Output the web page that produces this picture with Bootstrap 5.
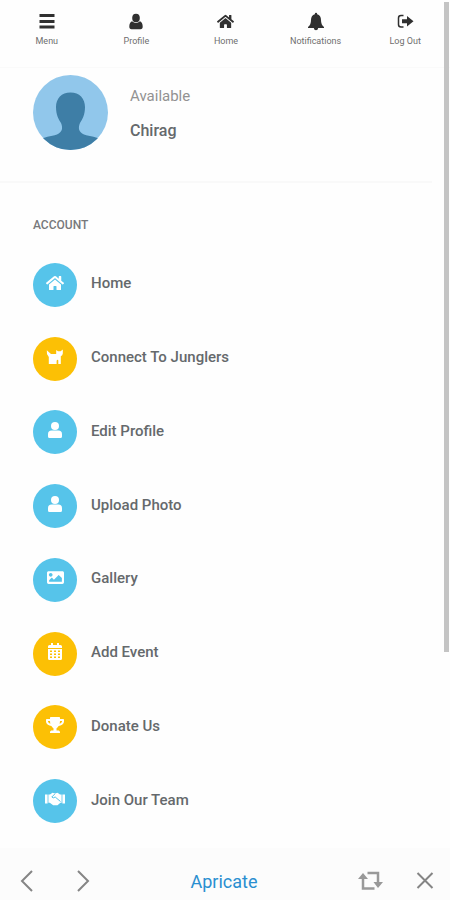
<!DOCTYPE html>
<html lang="en">
<head>
<meta charset="utf-8">
<meta name="viewport" content="width=device-width, initial-scale=1">
<title>Apricate</title>
<link href="https://cdn.jsdelivr.net/npm/bootstrap@5.3.0/dist/css/bootstrap.min.css" rel="stylesheet">
<style>
  body { font-family: Roboto, "Liberation Sans", sans-serif; background: #fefefe; color: #65696c; }
  svg { display: block; }
  a { color: inherit; text-decoration: none; }
  .topbar { padding: 12px 0 0 2px; height: 68px; border-bottom: 1px solid #fafafa; }
  .topbar a { flex: 1 1 0; font-size: 9px; line-height: 12px; color: #6e6e6e; }
  .topbar svg { fill: #303030; height: 20px; margin-bottom: 3px; }
  .profile { padding: 7px 33px 31px; gap: 22px; border-bottom: 2px solid #f9f9f9; margin-right: 18px; }
  .status { font-size: 15px; line-height: 20px; color: #929292; margin: 11px 0 15px; }
  .username { font-size: 16px; line-height: 20px; font-weight: 500; margin: 0; }
  .section-title { font-size: 12px; line-height: 16px; font-weight: 500; color: #77797b; margin: 34px 33px 15px; }
  .menu-list { padding: 0 33px; }
  .menu-list a { gap: 14px; font-size: 15px; line-height: 20px; font-weight: 500; }
  .menu-list a > span:last-child { padding-bottom: 3px; }
  .disc { width: 44px; height: 44px; padding-bottom: 4px; background: #56c4ea; }
  .disc.gold { background: #fcc005; }
  .disc svg { fill: #fff; }
  .bottombar { background: #fcfcfc; margin-top: 10px; padding: 20px 16px 0 20px; height: 52px; }
  .bottombar button { background: none; border: 0; padding: 0; }
  .bottombar svg { fill: none; stroke: #858585; stroke-width: 2; }
  .history { gap: 42px; }
  .actions { gap: 32px; }
  .site { font-size: 18px; line-height: 24px; color: #2a8fd0; padding-top: 2px; }
  .scroll-thumb { top: 2px; right: 1px; width: 5px; height: 650px; background: #c4c4c4; }
</style>
<script src="https://cdn.jsdelivr.net/npm/bootstrap@5.3.0/dist/js/bootstrap.bundle.min.js"></script>
</head>
<body>
<svg width="0" height="0" class="position-absolute" aria-hidden="true">
  <symbol id="i-home" viewBox="0 0 576 512"><path d="M280.37 148.26L96 300.11V464a16 16 0 0 0 16 16l112.06-.29a16 16 0 0 0 15.92-16V368a16 16 0 0 1 16-16h64a16 16 0 0 1 16 16v95.64a16 16 0 0 0 16 16.05L464 480a16 16 0 0 0 16-16V300L295.67 148.26a12.19 12.19 0 0 0-15.3 0zM571.6 251.47L488 182.56V44.05a12 12 0 0 0-12-12h-56a12 12 0 0 0-12 12v72.61L318.47 43a48 48 0 0 0-61 0L4.34 251.47a12 12 0 0 0-1.6 16.9l25.5 31A12 12 0 0 0 45.15 301l235.22-193.74a12.19 12.19 0 0 1 15.3 0L530.9 301a12 12 0 0 0 16.9-1.6l25.5-31a12 12 0 0 0-1.7-16.93z"/></symbol>
  <symbol id="i-user" viewBox="0 0 14 16"><circle cx="7" cy="4" r="4"/><path d="M3.6 8.6h6.8A3.6 3.6 0 0 1 14 12.200V14.500Q14 16 12.500 16H1.500Q0 16 0 14.500V12.200A3.600 3.600 0 0 1 3.600 8.600z"/></symbol>
</svg>

<div class="d-flex flex-column min-vh-100 position-relative">
  <nav class="topbar d-flex text-center" aria-label="Main">
    <a href="#" class="d-flex flex-column align-items-center">
      <svg width="16" height="20" viewBox="0 0 16 20"><path d="M0.500 2h15v3h-15zM0.500 8h15v3h-15zM0.500 13.500h15v3h-15z"/></svg>Menu</a>
    <a href="#" class="d-flex flex-column align-items-center">
      <svg width="14" height="20" viewBox="0 0 14 20"><ellipse cx="7" cy="6" rx="3.800" ry="4.300"/><path d="M3 9.300Q7 12.800 11 9.300Q13.700 10.500 13.700 14.500Q13.700 17.200 11.500 17.200H2.500Q.3 17.200.3 14.500Q.3 10.500 3 9.300z"/></svg>Profile</a>
    <a href="#" class="d-flex flex-column align-items-center">
      <svg width="17" height="20"><use href="#i-home" width="17" height="19"/></svg>Home</a>
    <a href="#" class="d-flex flex-column align-items-center">
      <svg width="18" height="20" viewBox="0 0 18 20"><path d="M9 .8q1.200 0 1.200 1.400Q14 3.200 14 8Q14 13 17 15V16H11.200Q10.900 18.300 9 18.300T6.800 16H1V15Q4 13 4 8Q4 3.200 7.800 2.200Q7.800.8 9 .8z"/></svg>Notifications</a>
    <a href="#" class="d-flex flex-column align-items-center">
      <svg width="17" height="20" viewBox="0 0 17 20"><path d="M6.500 3.500H4Q1.500 3.500 1.500 6v6.500Q1.500 15 4 15H6.500" fill="none" stroke="#303030" stroke-width="1.500"/><path d="M5 7.200h5V4l6.500 5.300L10 14.600v-3.300H5z"/></svg>Log Out</a>
  </nav>

  <header class="profile d-flex">
    <svg width="75" height="75" viewBox="0 0 75 75" role="img" aria-label="Profile picture">
      <defs><clipPath id="round"><circle cx="37.500" cy="37.500" r="37.500"/></clipPath></defs>
      <g clip-path="url(#round)"><path fill="#91c7eb" d="M0 0h75v75H0z"/>
      <path fill="#3e7ea6" d="M37.500 17.500C46.500 17.500 52 23.500 52 32C52 40 49.500 44 47 48C45 53 45.500 57 51 59.500C57 61.500 64 61.500 70 66V75H5V66C11 61.500 18 61.500 24 59.500C29.500 57 30 53 28 48C25.500 44 23 40 23 32C23 23.500 28.500 17.500 37.500 17.500z"/></g>
    </svg>
    <div>
      <p class="status">Available</p>
      <p class="username">Chirag</p>
    </div>
  </header>

  <h2 class="section-title">ACCOUNT</h2>
  <ul class="menu-list list-unstyled d-flex flex-column flex-grow-1 mb-0">
    <li class="d-flex flex-fill align-items-center"><a href="#" class="d-flex align-items-center">
      <span class="disc rounded-circle d-flex align-items-center justify-content-center"><svg width="18" height="16"><use href="#i-home"/></svg></span><span>Home</span></a></li>
    <li class="d-flex flex-fill align-items-center"><a href="#" class="d-flex align-items-center">
      <span class="disc gold rounded-circle d-flex align-items-center justify-content-center"><svg width="18" height="16" viewBox="0 0 18 16"><path d="M.8 1.200L3 3.200L5 5H10.200V1L12 2.300H14.600L16.800.6V4.600Q16.600 6.600 14.800 7.200V15H12.300V11.200Q11 10.200 10.600 12V15H2.800V8Q.2 5 .8 1.200z"/></svg></span><span>Connect To Junglers</span></a></li>
    <li class="d-flex flex-fill align-items-center"><a href="#" class="d-flex align-items-center">
      <span class="disc rounded-circle d-flex align-items-center justify-content-center"><svg width="14" height="16"><use href="#i-user"/></svg></span><span>Edit Profile</span></a></li>
    <li class="d-flex flex-fill align-items-center"><a href="#" class="d-flex align-items-center">
      <span class="disc rounded-circle d-flex align-items-center justify-content-center"><svg width="14" height="16"><use href="#i-user"/></svg></span><span>Upload Photo</span></a></li>
    <li class="d-flex flex-fill align-items-center"><a href="#" class="d-flex align-items-center">
      <span class="disc rounded-circle d-flex align-items-center justify-content-center"><svg width="17" height="17" viewBox="0 0 512 512"><path d="M464 448H48c-26.510 0-48-21.490-48-48V112c0-26.510 21.490-48 48-48h416c26.510 0 48 21.490 48 48v288c0 26.510-21.490 48-48 48zM112 120c-30.928 0-56 25.072-56 56s25.072 56 56 56 56-25.072 56-56-25.072-56-56-56zM64 384h384V272l-87.515-87.515c-4.686-4.686-12.284-4.686-16.971 0L208 320l-55.515-55.515c-4.686-4.686-12.284-4.686-16.971 0L64 336v48z"/></svg></span><span>Gallery</span></a></li>
    <li class="d-flex flex-fill align-items-center"><a href="#" class="d-flex align-items-center">
      <span class="disc gold rounded-circle d-flex align-items-center justify-content-center"><svg width="14" height="17" viewBox="0 0 14 17"><path d="M3 0h2v2h4V0h2v2h1.500Q14 2 14 3.500V5H0V3.500Q0 2 1.500 2H3zM0 6h14v9.500Q14 17 12.500 17h-11Q0 17 0 15.500z"/><path fill="#fcc005" d="M2 7.500h2V9H2zm4 0h2V9H6zm4 0h2V9h-2zM2 10.500h2V12H2zm4 0h2V12H6zm4 0h2V12h-2zM2 13.500h2V15H2zm4 0h2V15H6zm4 0h2V15h-2z"/></svg></span><span>Add Event</span></a></li>
    <li class="d-flex flex-fill align-items-center"><a href="#" class="d-flex align-items-center">
      <span class="disc gold rounded-circle d-flex align-items-center justify-content-center"><svg width="18" height="16" viewBox="0 0 576 512"><path d="M552 64H448V24c0-13.300-10.700-24-24-24H152c-13.300 0-24 10.700-24 24v40H24C10.700 64 0 74.700 0 88v56c0 35.700 22.500 72.400 61.900 100.700 31.500 22.700 69.800 37.100 110 41.700C203.300 338.500 240 360 240 360v72h-48c-35.300 0-64 20.700-64 56v12c0 6.600 5.400 12 12 12h296c6.600 0 12-5.400 12-12v-12c0-35.300-28.700-56-64-56h-48v-72s36.700-21.500 68.100-73.600c40.300-4.600 78.600-19 110-41.700 39.300-28.300 61.900-65 61.900-100.700V88c0-13.300-10.700-24-24-24zM99.300 192.800C74.900 175.200 64 155.600 64 144v-16h64.200c1 32.600 5.800 61.200 12.800 86.200-15.100-5.200-29.200-12.400-41.700-21.400zM512 144c0 16.100-17.700 36.100-35.300 48.800-12.500 9-26.700 16.200-41.800 21.400 7-25 11.800-53.600 12.800-86.200H512v16z"/></svg></span><span>Donate Us</span></a></li>
    <li class="d-flex flex-fill align-items-center"><a href="#" class="d-flex align-items-center">
      <span class="disc rounded-circle d-flex align-items-center justify-content-center"><svg width="20" height="14" viewBox="0 0 20 14"><path d="M0 2.500h2.600v9H0zM17.400 2.500H20v9h-2.600zM3.400 2.500H5L7.500.8 10 1.500l2.500-.7L15 2.500h1.600v8.300h-1.200L12.500 13.300H8.200L4.800 10.800H3.400z"/><path fill="none" stroke="#56c4ea" stroke-width="1" d="M10 1.800L6.800 5Q8 6.800 10.200 5L15.500 9.500"/></svg></span><span>Join Our Team</span></a></li>
  </ul>

  <footer class="bottombar d-flex justify-content-between align-items-start">
    <div class="history d-flex">
      <button type="button" aria-label="Back"><svg width="14" height="24" viewBox="0 0 14 24"><path d="M12 3L2 13l10 10"/></svg></button>
      <button type="button" aria-label="Forward"><svg width="14" height="24" viewBox="0 0 14 24"><path d="M2 3l10 10L2 23"/></svg></button>
    </div>
    <a href="#" class="site">Apricate</a>
    <div class="actions d-flex">
      <button type="button" aria-label="Reload"><svg width="26" height="24" viewBox="0 0 26 24"><path stroke="#999" stroke-width="2.500" d="M9.500 5H20v12M16.500 20.500H5V9"/><path fill="#999" stroke="none" d="M0 11L5 5l5 6zM15.500 14h9.500L20 20z"/></svg></button>
      <button type="button" aria-label="Close"><svg width="18" height="24" viewBox="0 0 18 24"><path d="M1.500 5l15 15M16.500 5l-15 15"/></svg></button>
    </div>
  </footer>
  <div class="scroll-thumb position-absolute"></div>
</div>
</body>
</html>
